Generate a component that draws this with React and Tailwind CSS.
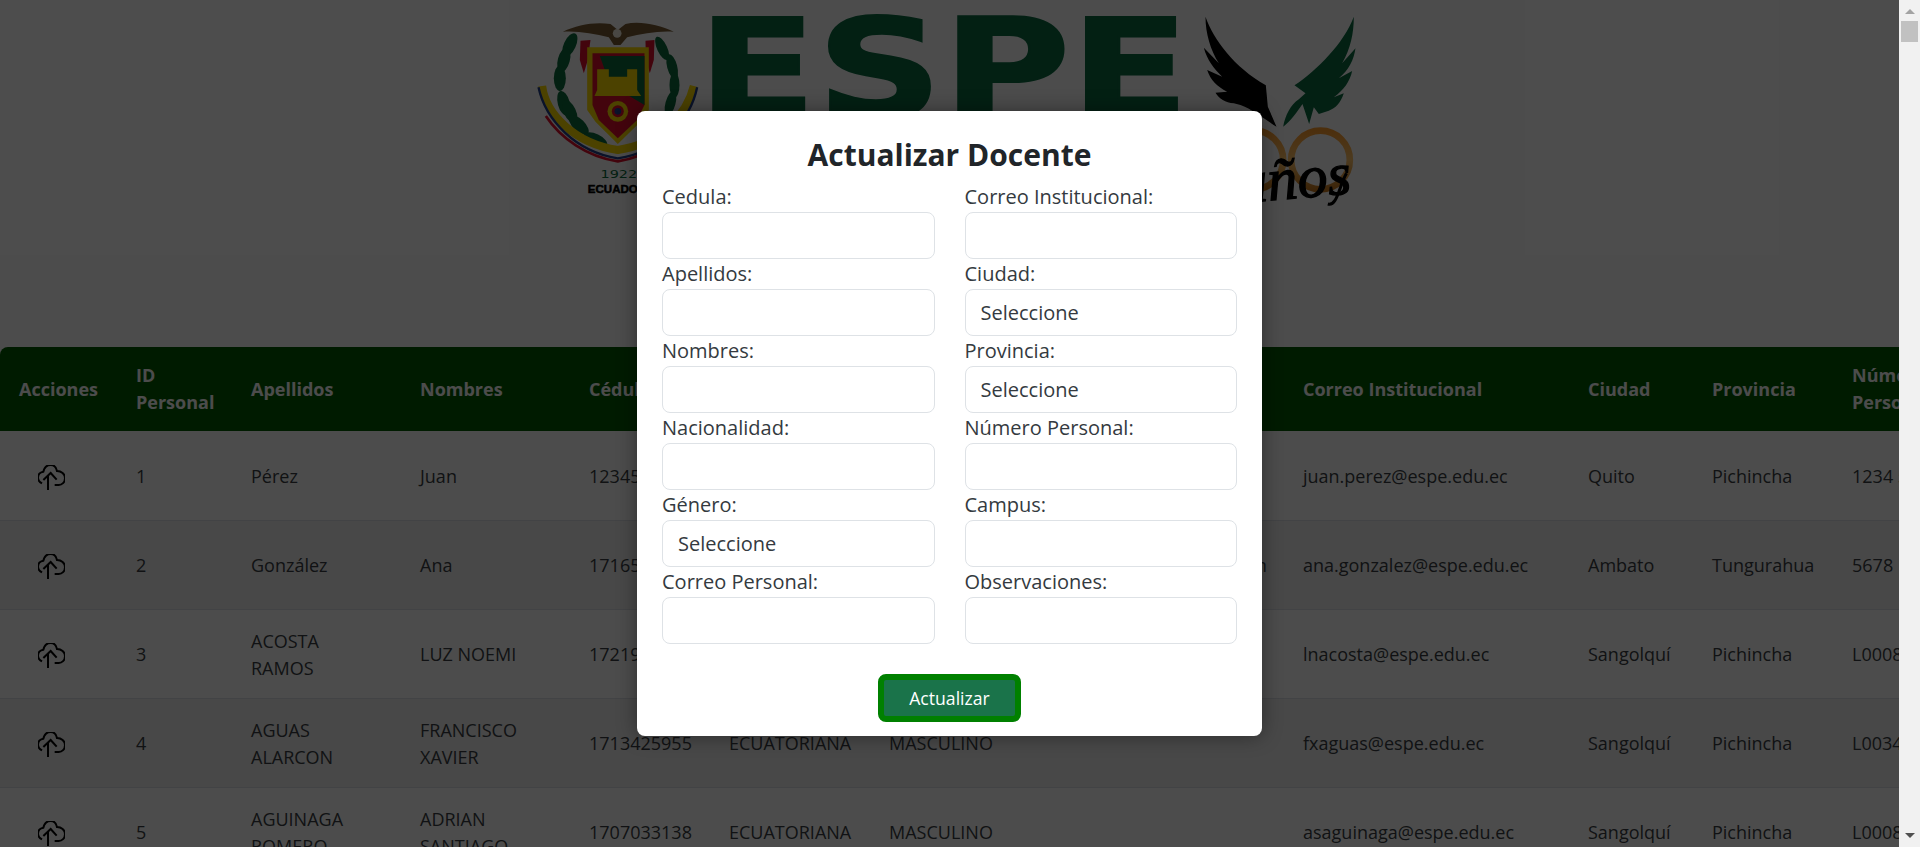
import React from "react";

const columns = [
  { label: "Acciones", width: 121 },
  { label: "ID\nPersonal", width: 115 },
  { label: "Apellidos", width: 169 },
  { label: "Nombres", width: 169 },
  { label: "Cédula", width: 140 },
  { label: "Nacionalidad", width: 160 },
  { label: "Género", width: 148 },
  { label: "Correo Personal", width: 266 },
  { label: "Correo Institucional", width: 285 },
  { label: "Ciudad", width: 124 },
  { label: "Provincia", width: 140 },
  { label: "Número\nPersonal", width: 200 },
];

const rows = [
  ["1", "Pérez", "Juan", "1234567890", "Ecuatoriana", "Masculino", "juan.perez@gmail.com", "juan.perez@espe.edu.ec", "Quito", "Pichincha", "1234 567"],
  ["2", "González", "Ana", "1716512345", "Ecuatoriana", "Femenino", "ana.gonzalez@hotmail.com", "ana.gonzalez@espe.edu.ec", "Ambato", "Tungurahua", "5678 123"],
  ["3", "ACOSTA\nRAMOS", "LUZ NOEMI", "1721934567", "ECUATORIANA", "FEMENINO", "", "lnacosta@espe.edu.ec", "Sangolquí", "Pichincha", "L00081234"],
  ["4", "AGUAS\nALARCON", "FRANCISCO\nXAVIER", "1713425955", "ECUATORIANA", "MASCULINO", "", "fxaguas@espe.edu.ec", "Sangolquí", "Pichincha", "L00341234"],
  ["5", "AGUINAGA\nROMERO", "ADRIAN\nSANTIAGO", "1707033138", "ECUATORIANA", "MASCULINO", "", "asaguinaga@espe.edu.ec", "Sangolquí", "Pichincha", "L00081235"],
];

const fields = [
  { label: "Cedula:" },
  { label: "Correo Institucional:" },
  { label: "Apellidos:" },
  { label: "Ciudad:", select: true },
  { label: "Nombres:" },
  { label: "Provincia:", select: true },
  { label: "Nacionalidad:" },
  { label: "Número Personal:" },
  { label: "Género:", select: true },
  { label: "Campus:" },
  { label: "Correo Personal:" },
  { label: "Observaciones:" },
];

// leaves of the wreath: x, y, rotation
const leavesLeft = [
  [118, 105, 25], [100, 150, 15], [88, 205, 0], [100, 280, -15], [118, 305, -25],
  [145, 345, -45], [195, 390, -65],
];
const leavesRight = [
  [395, 115, -25], [425, 170, -15], [432, 225, 0], [420, 280, 15],
];

const Logo = () => (
  <svg viewBox="529.5 0 840 220" className="w-[840px] h-[220px] shrink-0">
    <defs>
      <linearGradient id="gold" x1="0" y1="0" x2="0" y2="1">
        <stop offset="0" stopColor="#ff9d2e" />
        <stop offset="0.5" stopColor="#ffc46a" />
        <stop offset="1" stopColor="#c97a1e" />
      </linearGradient>
    </defs>

    {/* Coat of arms */}
    <g transform="translate(530 10) scale(0.3333)">
      <path d="M97 65 C140 45 190 35 240 42 L262 60 L285 42 C330 32 385 45 430 65 C385 62 335 70 290 82 L270 105 L250 105 L235 82 C190 70 140 62 97 65 Z" fill="#7a5c34" />
      <circle cx="260" cy="70" r="13" fill="#f4efe0" />
      {leavesLeft.map(([x, y, r]) => (
        <ellipse key={`${x}${y}`} cx={x} cy={y} rx="18" ry="38" fill="#0c6b3c" transform={`rotate(${r} ${x} ${y})`} />
      ))}
      {leavesRight.map(([x, y, r]) => (
        <ellipse key={`${x}${y}`} cx={x} cy={y} rx="15" ry="38" fill="#0c6b3c" transform={`rotate(${r} ${x} ${y})`} />
      ))}
      <path d="M150 92 L180 90 L172 150 L160 190 L148 150 Z" fill="#e0102e" />
      <path d="M345 92 L372 90 L370 150 L358 190 L346 150 Z" fill="#e0102e" />
      <path d="M170 112 H355 V300 L330 335 L262 402 L195 335 L170 300 Z" fill="#ffdc00" />
      <path d="M186 130 H342 V285 L320 330 L262 385 L205 330 L186 285 Z" fill="#e0102e" />
      <path d="M208 138 H342 V285 L250 230 L225 185 Z" fill="#0c6b3c" />
      <path d="M192 258 H332 L320 240 V178 H290 V200 H235 V178 H200 V240 Z" fill="#ffdc00" />
      <circle cx="262" cy="304" r="31" fill="#ffdc00" />
      <circle cx="262" cy="304" r="18" fill="#e0102e" />
      <circle cx="262" cy="304" r="10" fill="#22408c" />
      <path d="M35 228 C45 310 130 400 262 420 C395 400 470 310 490 228" fill="none" stroke="#ffdc00" strokeWidth="24" />
      <path d="M24 232 C45 330 135 425 262 445 C395 425 480 330 500 232" fill="none" stroke="#22408c" strokeWidth="7" />
      <path d="M46 318 C90 385 170 440 262 454 C350 440 430 385 470 318" fill="none" stroke="#e0102e" strokeWidth="8" />
      <text x="210" y="503" fontFamily="'DejaVu Sans', sans-serif" fontSize="32" fill="#0c6b3c" textLength="110" lengthAdjust="spacingAndGlyphs">1922</text>
      <text x="172" y="550" fontFamily="'Liberation Sans', sans-serif" fontWeight="700" fontSize="34" fill="#000" stroke="#000" strokeWidth="1.5" textLength="175" lengthAdjust="spacingAndGlyphs">ECUADOR</text>
    </g>

    {/* Wordmark */}
    <text x="697" y="117" fontFamily="'DejaVu Sans', sans-serif" fontWeight="700" fontSize="137" fill="#0b6b42" stroke="#0b6b42" strokeWidth="2" textLength="492" lengthAdjust="spacingAndGlyphs">ESPE</text>

    {/* Eagle and anniversary */}
    <g transform="translate(1190 10) scale(0.3333)">
      <path d="M45 20 C70 90 130 170 226 226 L232 290 L258 350 C225 330 190 300 150 285 L130 280 C105 278 85 265 75 248 L110 245 C80 230 60 210 50 180 L95 200 C70 175 50 150 40 113 L85 160 C60 120 45 70 45 20 Z" fill="#000" />
      <path d="M490 20 C490 70 480 115 455 160 L495 115 C490 150 475 180 445 205 L485 183 C478 215 460 240 430 262 L460 250 C450 280 435 295 415 302 L385 312 L370 292 L356 342 L336 282 C320 305 300 335 278 350 C285 315 300 285 325 268 L345 250 L312 226 C380 180 460 100 490 20 Z" fill="#0b6b42" />
      <circle cx="390" cy="450" r="88" fill="none" stroke="url(#gold)" strokeWidth="20" />
      <circle cx="190" cy="450" r="88" fill="none" stroke="url(#gold)" strokeWidth="20" />
      <text x="485" y="550" textAnchor="end" fontFamily="'Liberation Serif', serif" fontStyle="italic" fontSize="180" fill="#000" stroke="#000" strokeWidth="4" transform="rotate(-5 485 550)">años</text>
      <path d="M468 490 C445 530 440 590 412 582" fill="none" stroke="#000" strokeWidth="9" />
    </g>
  </svg>
);

const CloudIcon = () => (
  <svg viewBox="0 0 81 75" className="w-[27px] h-[25px]" fill="none" stroke="#000" strokeWidth="6">
    <path d="M12 55 C3 50 0 45 0 38 C0 28 8 21 16 20 C19 8 28 0 38 0 C48 0 55 8 57 18 C70 18 81 27 81 40 C81 52 72 60 62 60 L50 60" />
    <path d="M30 75 V32" />
    <path d="M16 45 L38 24 L56 44" />
  </svg>
);

const Scrollbar = () => (
  <div className="w-[21px] shrink-0 bg-[#f1f1f1] flex flex-col items-center justify-between pt-[9px] pb-[9px]">
    <div className="flex flex-col items-center">
      <div className="w-0 h-0 border-x-[5px] border-x-transparent border-b-[5px] border-b-[#a3a3a3]" />
      <div className="w-[17px] h-[21px] mt-[7px] bg-[#c1c1c1]" />
    </div>
    <div className="w-0 h-0 border-x-[5px] border-x-transparent border-t-[5px] border-t-[#505050]" />
  </div>
);

export default function App() {
  return (
    <div className="h-screen w-full flex overflow-hidden bg-white font-['Open_Sans',sans-serif] text-[#212529]">
      <div className="relative flex-1 min-w-0 overflow-hidden">
        {/* Header logo */}
        <div className="h-[347px] flex justify-center">
          <Logo />
        </div>

        {/* Teachers table */}
        <table className="table-fixed border-collapse w-[2037px] text-[18px] leading-[27px]">
          <colgroup>
            {columns.map((c) => (
              <col key={c.label} style={{ width: c.width }} />
            ))}
          </colgroup>
          <thead>
            <tr className="bg-[#005a00] text-white h-[84px]">
              {columns.map((c, i) => (
                <th key={c.label} className={`text-left font-bold whitespace-pre-line ${i === 0 ? "rounded-tl-lg pl-[19px] pr-0" : "px-[15px]"}`}>
                  {c.label}
                </th>
              ))}
            </tr>
          </thead>
          <tbody>
            {rows.map((row, r) => (
              <tr key={r} className={`h-[89px] border-b border-[#dee2e6] text-[#3a3f44] ${r % 2 === 1 ? "bg-[#f0f0f0]" : "bg-white"}`}>
                <td className="pl-[38px] pt-[4px]">
                  <CloudIcon />
                </td>
                {row.map((cell, i) => (
                  <td key={i} className="px-[15px] pt-[2px] whitespace-pre-line">
                    {cell}
                  </td>
                ))}
              </tr>
            ))}
          </tbody>
        </table>

        {/* Modal */}
        <div className="absolute inset-0 bg-black/70 flex items-center justify-center">
          <div className="w-[625px] h-[625px] bg-white rounded-lg p-[25px] shadow-[0_0_20px_rgba(0,0,0,0.4)]">
            <h2 className="text-[30px] leading-[38px] mb-[8px] font-bold text-center">Actualizar Docente</h2>
            <form className="grid grid-cols-2 gap-x-[30px]">
              {fields.map((f) => (
                <div key={f.label}>
                  <label className="block text-[20px] leading-[30px] text-[#343a40]">{f.label}</label>
                  {f.select ? (
                    <select className="block w-full h-[47px] px-[15px] bg-white border border-[#dee2e6] rounded-lg text-[20px] text-[#343a40] appearance-none">
                      <option>Seleccione</option>
                    </select>
                  ) : (
                    <input className="block w-full h-[47px] px-[15px] bg-white border border-[#dee2e6] rounded-lg text-[20px]" />
                  )}
                </div>
              ))}
              <div className="col-span-2 flex justify-center mt-[30px]">
                <button type="button" className="w-[143px] h-[48px] bg-[#1a734a] border-[6px] border-[#008000] rounded-lg text-white text-[17.6px]">
                  Actualizar
                </button>
              </div>
            </form>
          </div>
        </div>
      </div>
      <Scrollbar />
    </div>
  );
}
